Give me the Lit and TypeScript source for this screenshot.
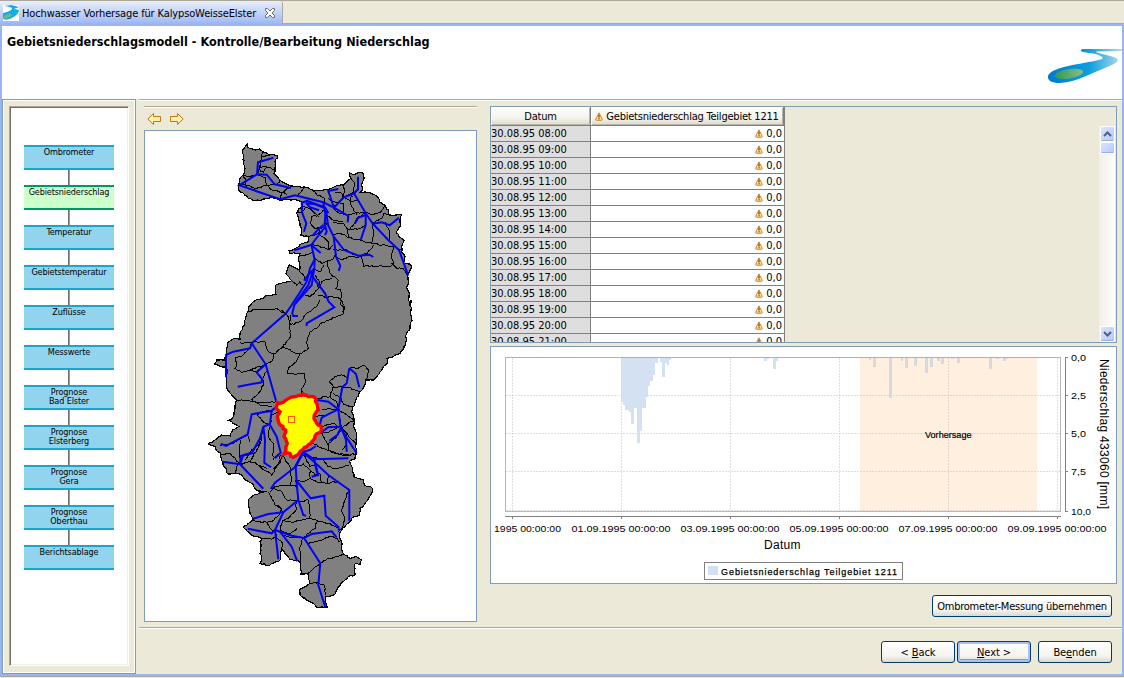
import { LitElement, html, svg, css } from "lit";
import { customElement } from "lit/decorators.js";

type Pt = [number, number];

// Map geometry is digitised on three sheets, three units per pixel.
const SHEET: Record<string, number> = { A: 135, B: 300, C: 450 };

function pts(src: string): Pt[] {
  let top = SHEET.A;
  const out: Pt[] = [];
  for (const tok of src.trim().split(/\s+/)) {
    if (SHEET[tok] !== undefined) { top = SHEET[tok]; continue; }
    const [x, y] = tok.split(",").map(Number);
    out.push([200 + x / 3, top + y / 3]);
  }
  return out;
}

let seed = 7;
function rnd() {
  seed = (seed * 16807) % 2147483647;
  return seed / 2147483647 - 0.5;
}

function rough(p: Pt[], amp = 1.3): Pt[] {
  const out: Pt[] = [p[0]];
  for (let i = 1; i < p.length; i++) {
    const [ax, ay] = p[i - 1], [bx, by] = p[i];
    const n = Math.max(1, Math.round(Math.hypot(bx - ax, by - ay) / 2.2));
    for (let k = 1; k < n; k++)
      out.push([ax + ((bx - ax) * k) / n + rnd() * amp, ay + ((by - ay) * k) / n + rnd() * amp]);
    out.push(p[i]);
  }
  return out;
}
const str = (p: Pt[]) => p.map(([x, y]) => x.toFixed(1) + "," + y.toFixed(1)).join(" ");

const OUTLINE = str(rough(pts(`A 142,28 148,40 165,45 178,42 188,50 205,58 232,62 225,80 225,100 222,115 235,130 245,140 265,150 285,155 305,157 325,158
 340,168 360,167 385,163 410,152 430,150 440,140 452,128 450,115 465,120 475,113 490,115 492,130 485,150 487,165 480,172 500,172 520,178
 535,188 540,203 555,210 565,225 565,238 590,240 605,238 600,260 600,275 590,290 597,305 612,315 605,335 605,350 615,365 610,385 632,388
 633,400 622,420 625,440 620,460 628,475 625,495 632,515 B 633,0 631,40 636,62 630,85 618,105 617,135 600,160 575,172 560,175 562,190
 545,210 520,240 497,240 495,255 480,275 463,310 455,335 462,355 460,380 470,400 468,430 470,460 C 465,25 448,35 458,60 462,80 490,90
 495,107 515,112 517,125 505,145 495,160 480,175 478,195 455,205 445,220 425,240 418,255 425,275 425,300 430,312 450,325 468,320 484,330
 482,342 465,342 463,365 465,375 445,380 430,395 412,415 405,432 385,440 376,440 375,455 382,472 350,472 340,460 320,450 300,435 298,420
 315,410 330,400 325,385 325,372 303,372 302,340 295,333 270,328 255,310 245,295 242,328 235,335 215,340 205,347 180,340 185,325 180,310
 183,290 180,275 185,265 160,258 143,245 130,232 145,220 160,210 150,190 145,170 145,150 165,133 200,125 170,122 155,100 135,88 125,75
 105,70 85,72 72,50 62,20 60,8 48,0 B 45,440 25,432 45,420 65,405 90,408 97,390 120,380 85,362 100,350 105,325 110,300 95,285 80,265
 78,230 82,210 80,200 60,200 43,192 50,180 75,180 80,145 85,125 105,115 120,118 120,100 133,75 140,45 145,25 A 145,520 160,500 185,490
 205,482 228,478 228,450 250,442 275,437 258,415 262,400 268,390 285,398 298,405 300,395 297,365 300,355 270,355 267,348 290,338 310,325
 325,320 325,305 302,300 305,285 300,265 290,235 295,222 310,215 305,200 285,193 240,195 210,188 165,198 145,190 130,175 118,170 115,150
 120,130 130,120 135,100 130,85 130,60 128,45 136,35 142,28`)));

const BORDERS = `A 188,50 183,75 178,95 172,118 150,125 130,122|A 178,95 200,96 222,104|A 178,103 190,112 202,96|A 183,65 210,60
A 118,150 135,150 135,130 128,122|A 135,150 170,160 200,150 222,150 240,140|A 150,165 170,160|A 172,118 196,128 200,150|A 240,190 245,175 265,160 275,155
A 200,150 215,165 250,172 262,180|A 285,183 300,175 310,158|A 340,168 350,180 375,190 372,200|A 385,163 390,190 405,215|A 430,150 432,168 428,190
A 452,128 465,145 460,172 440,182 430,190|A 405,172 425,175 435,190 455,200 470,195|A 385,190 395,200 430,205 432,235 445,245
A 400,220 420,235 445,240 460,235 497,232|A 460,172 450,195 455,215 470,240|A 497,232 515,240 540,232 555,212|A 518,265 545,250 550,235 565,238
A 497,232 470,250 462,268 443,285 445,308|A 518,265 522,300 515,325|A 445,285 480,280 497,268|A 555,262 570,290 568,315
A 400,300 420,295 445,308 480,315 515,325 545,330 580,335 605,345|A 400,262 430,265 445,285|A 380,240 400,255 430,262
A 580,335 575,360 580,385 570,395 490,393 485,365|A 485,365 450,365 425,375 405,362 400,372 382,378|A 485,365 505,350 520,330
A 575,385 590,400 610,400 622,420
A 400,345 440,345 460,360|A 382,378 385,400 395,420 415,435 408,460 422,465 425,485 420,505 432,515 430,535 B 430,20 430,42 410,50 388,60 365,68 350,85 330,95 320,125 325,145 300,162 275,155 270,148 248,142
A 302,300 325,305 345,300 370,285 382,262|A 370,225 355,240 335,245 332,265 345,280 370,278|A 310,215 330,220 345,235 358,245
A 290,235 310,228 318,215|A 355,280 360,300 385,320 385,345|A 335,328 360,335 385,345 400,330|A 342,370 365,385 382,378
A 300,362 325,358 340,350|A 340,400 360,410 372,390|A 345,420 358,440 352,465 330,485 315,480|A 355,480 375,487 390,485
A 395,430 365,440 358,460|A 275,437 290,450 300,440 310,450|A 390,485 420,490 430,510|A 298,405 310,420 320,440
A 145,528 180,522 210,525 230,520 250,535|B 245,30 265,50 270,75 300,65 320,40 350,20 360,0|B 270,45 268,80 272,110 248,142
B 120,128 155,128 195,125 205,155 222,162 248,142|B 155,128 150,145 125,168 105,175 110,195 105,205 125,217 150,212|B 222,162 215,185 195,195 165,205 150,212
B 150,212 165,215 190,200|B 300,162 290,185 265,205 262,220 315,222 315,250 305,265 305,282|B 200,215 190,230 190,255 180,275 155,300
B 110,300 150,303 190,308 228,305|B 155,300 180,315 215,320|B 172,345 190,335 215,330|B 205,375 185,360 172,345|B 235,335 215,345 212,370
B 345,300 375,290 390,290 400,260 388,245 405,230 425,225 445,232|B 448,205 475,205 490,195 505,210 500,240|B 480,275 445,262 400,262
B 388,290 410,305 415,330|B 400,280 425,295 430,315 455,320|B 415,330 440,345 460,360|B 365,330 390,325 412,330|B 345,350 380,345 410,330
B 360,380 400,370 425,385|B 360,400 385,398 420,378|B 385,430 410,410 425,385|B 425,385 445,370 462,360|B 415,340 425,385 468,430
B 365,395 375,420 385,435 385,450 410,460|B 330,425 355,440 410,460 445,465|B 410,460 435,468 470,460|B 440,400 440,430 428,450
B 60,437 100,430 142,405 150,425|B 120,420 118,450 122,490|B 185,400 178,430 155,450 135,480|B 190,380 185,420 170,455 145,465
B 210,380 205,410 220,430 220,470|B 242,460 225,470 220,480|B 250,460 240,490 220,505|B 122,490 150,485 175,495 200,505
C 60,15 90,10 120,42 150,35 165,5|C 165,35 185,55 215,75 235,40 242,15|C 105,70 110,50 120,42|C 245,15 270,50 275,85 270,105 225,110 210,125
C 205,125 215,145 225,165 240,170 250,188|C 220,115 245,125 260,150 290,152|C 270,105 290,110 287,90|C 287,50 310,42 330,60 330,85 310,95 287,90
C 330,60 345,75 360,70|C 310,15 330,50 350,40|C 330,20 370,30 385,50 410,55 448,45|C 385,75 382,100 350,95 330,85|C 360,70 365,100
C 382,100 415,95 445,120 435,150 425,180 435,205 428,230 415,245|C 290,155 285,185 265,205 250,212|C 300,155 325,150 330,180 328,205 300,212 280,218 250,212
C 160,210 185,218 215,215 240,190|C 200,220 215,240 228,240|C 185,265 215,268 230,262 225,240|C 240,190 245,175 230,168|C 230,262 248,280 245,300
C 248,210 240,240 250,255|C 250,255 275,262 310,262|C 310,262 345,235 350,215|C 328,205 355,215 390,220 418,240|C 310,262 300,290 302,340
C 310,262 325,280 365,270 390,258 412,265 418,275|C 303,372 325,370 362,340 385,325 410,320 430,312|C 355,398 330,400
C 355,400 372,405 378,435|C 240,240 270,252 290,235`
  .split(/[|\n]/).map((s) => str(rough(pts(s))));

const RIVERS = `A 220,68 174,82 171,118 118,151 240,193 285,181 370,202 402,218 445,243 443,262|A 171,118 200,119 224,148 273,159
A 474,125 474,163 462,175 430,188 402,218 385,168 415,162|A 462,175 497,235 518,266 565,315 597,345 625,422|A 518,266 545,262 569,271 597,248
A 497,235 497,270 482,315|A 497,240 475,248 464,266|A 305,203 322,197 355,210 372,215|A 305,203 307,235 319,265 312,290|A 318,203 330,217 357,226|A 322,205 345,208 372,218
A 370,203 376,235 375,270 380,290 375,300|A 374,215 385,235|A 376,250 372,280 345,315 334,330 283,346|A 370,270 350,288 338,302
A 334,330 362,354|A 334,328 344,375 343,400 325,420 312,437|A 343,375 330,400 320,440 275,510 258,535 B 155,130
A 343,400 335,450 305,485 283,510 277,535 B 280,48 294,48|A 335,415 340,428 375,475 386,500 403,517 B 320,70 320,78
A 338,410 325,450 285,505|A 378,225 384,270 401,305 432,345 475,362 508,359 520,366|A 401,305 408,365 421,392 416,408
B 155,130 150,145 100,155 78,165 78,232|B 155,130 197,193 228,302|B 197,193 170,217 187,238 185,247 113,260
B 228,320 215,332 155,343 143,403 78,438 62,431|B 215,332 210,372 190,380 180,415 155,460 122,468 120,493
B 190,380 195,420 193,488 213,502|B 210,375 230,410 242,458 225,475|B 352,300 385,305 415,328 390,340 365,353 360,372
B 448,205 440,250 427,262 415,328 422,385 470,460|B 448,205 468,222 478,262|B 360,400 385,382 422,380|B 422,385 412,405 388,422|B 425,385 438,420 440,455
B 348,438 330,450 310,455 285,500|B 310,455 342,478 445,475|B 342,478 352,520|C 68,35 120,43 190,116|C 120,43 130,15 155,8
C 310,8 287,50 225,98 212,117|C 287,50 290,100 295,150 310,195 318,197|C 288,90 332,145 373,137 377,197 415,230 417,242
C 310,8 342,35 385,75 448,120 448,212|C 342,28 355,75 335,80|C 295,150 250,187 205,192 160,206|C 250,187 225,240 230,285 235,328
C 225,240 215,250 143,236|C 225,240 275,257 312,264 335,252 395,244 410,262|C 240,245 275,290 292,334|C 312,264 361,340 355,405 376,472`
  .split(/[|\n]/).map((s) => str(pts(s)));

const SELECTED = str(rough(pts(`B 233,308 250,307 272,292 292,288 310,282 325,290 345,293 350,310 355,330 345,342 342,355 350,370 362,378 362,395
 345,408 335,425 320,440 300,455 280,472 262,458 252,462 262,430 252,410 257,390 237,370 232,350 240,335 228,322 233,308`), 1.5));

// x, width and lower end of each rainfall bar
const BARS: [number, number, number][] = [
  [621, 2, 402], [623, 2, 405], [625, 4, 410], [629, 2, 412], [631, 3, 424], [634, 3, 408], [637, 2.5, 443], [639.5, 2.5, 431],
  [642, 4, 408], [646, 2, 397], [648, 2, 386], [650, 3, 381], [653, 2, 375], [655, 3, 363], [660, 2, 362], [662, 3, 377], [665, 2, 363],
  [667, 2, 365], [669, 2, 360], [764, 3, 361], [767, 2, 359], [773, 3, 369], [776, 2, 361],
];
const FORECAST: [number, number, number][] = [
  [869, 2, 360], [873, 3, 367], [889, 3, 398], [901, 2, 361], [905, 3, 368], [914, 3, 366], [925, 3, 373], [930, 3, 367], [937, 3, 361],
  [941, 3, 364], [951, 3, 359], [957, 3, 363], [989, 3, 369], [996, 3, 359], [1003, 3, 361], [1006, 2, 359],
];

const STEPS = [["Ombrometer"], ["Gebietsniederschlag"], ["Temperatur"], ["Gebietstemperatur"], ["Zuflüsse"], ["Messwerte"],
  ["Prognose", "Bad Elster"], ["Prognose", "Elsterberg"], ["Prognose", "Gera"], ["Prognose", "Oberthau"], ["Berichtsablage"]];
const HOURS = ["08", "09", "10", "11", "12", "13", "14", "15", "16", "17", "18", "19", "20", "21"];

const warn = html`<svg class="warn" width="8" height="9" viewBox="0 0 8 9">
  <path d="M4 .8 L7.3 7.2 Q7.4 8.300 6.600 8.300 H1.400 Q.6 8.300 .7 7.200 Z" fill="#fbd98c" stroke="#d08a30" stroke-width="1"/>
  <path d="M4 2.500V5.500M4 6.200V7.300" stroke="#4a3000" stroke-width="1"/></svg>`;

@customElement("basin-map")
export class BasinMap extends LitElement {
  static styles = css`:host { display: block; } svg { display: block; }`;
  render() {
    return html`<svg width="331" height="490" viewBox="145 131 331 490" fill="none">
      <polygon points=${OUTLINE} fill="#808080" stroke="#000" stroke-width="1.2" shape-rendering="crispEdges"/>
      <g stroke="#000" stroke-width="1" shape-rendering="crispEdges">${BORDERS.map((b) => svg`<polyline points=${b}/>`)}</g>
      <g stroke="#0000fa" stroke-width="2">${RIVERS.map((r) => svg`<polyline points=${r}/>`)}</g>
      <polygon points=${SELECTED} fill="#ff0" stroke="#f00" stroke-width="3.4"/>
      <rect x="288.5" y="416.5" width="6" height="6" stroke="#ff5a00"/>
    </svg>`;
  }
}

@customElement("rain-chart")
export class RainChart extends LitElement {
  static styles = css`
    :host { display: block; }
    svg { display: block; font-family: "Liberation Sans", Arial, sans-serif; }
    .tick { font-size: 9.5px; }
    .title { font-size: 12px; }
    .mark { font-size: 9px; stroke: #000; stroke-width: 0.2; }
    .key { font-size: 9px; stroke: #000; stroke-width: 0.25; }
  `;
  render() {
    const days = ["01", "03", "05", "07", "09"];
    const vals: [string, number][] = [["0,0", 357.5], ["2,5", 395.5], ["5,0", 433.5], ["7,5", 471.5], ["10,0", 511.5]];
    const bar = ([x, w, y]: [number, number, number]) => svg`<rect x=${x} y="358" width=${w} height=${y - 358}/>`;
    return html`<svg width="625" height="236" viewBox="491 347 625 236">
      <rect x="505.5" y="357.5" width="555" height="154" fill="#fff" stroke="#b8b8b8"/>
      <rect x="860" y="358" width="177" height="153" fill="#feefdf"/>
      <g stroke="#c0c0c0" stroke-opacity=".5" stroke-dasharray="2 1">
        ${[395.5, 433.5, 471.5, 510.5].map((y) => svg`<path d="M506 ${y}H1060"/>`)}
        ${[512.5, 621.5, 730.5, 839.5, 948.5, 1057.5].map((x) => svg`<path d="M${x} 358V511"/>`)}
      </g>
      <g fill="#cfdef2" fill-opacity=".9" shape-rendering="crispEdges">${BARS.map(bar)}</g>
      <g fill="#d8d8de" shape-rendering="crispEdges">${FORECAST.map(bar)}</g>
      <path d="M505 357.5H1061" stroke="#b0b0b0"/>
      <path d="M505 516.5H1061M1065.5 357V512" stroke="#808080"/>
      <g stroke="#808080">
        ${[512.5, 621.5, 730.5, 839.5, 948.5, 1057.5].map((x) => svg`<path d="M${x} 516V519"/>`)}
        ${vals.map(([, y]) => svg`<path d="M1065 ${y}H1068"/>`)}
      </g>
      <g class="tick">
        <text x="494" y="532" textLength="67" lengthAdjust="spacingAndGlyphs">1995 00:00:00</text>
        ${days.map((d, i) => svg`<text x=${571.5 + i * 109} y="532" textLength="99" lengthAdjust="spacingAndGlyphs">${d}.09.1995 00:00:00</text>`)}
        ${vals.map(([t, y]) => svg`<text x="1071" y=${y + 3.8} textLength=${t.length > 3 ? 20 : 15} lengthAdjust="spacingAndGlyphs">${t}</text>`)}
        <text x="925" y="438" textLength="46.500" lengthAdjust="spacingAndGlyphs" class="mark">Vorhersage</text>
      </g>
      <text class="title" x="764" y="549" textLength="36.500">Datum</text>
      <text class="title" transform="translate(1100 359) rotate(90)" textLength="150">Niederschlag 433060 [mm]</text>
      <rect x="704.500" y="562.500" width="198" height="17" fill="#fff" stroke="#808080"/>
      <rect x="708" y="566" width="10" height="9" fill="#d3dff2"/>
      <text class="key" x="721" y="575" textLength="176">Gebietsniederschlag Teilgebiet 1211</text>
    </svg>`;
  }
}

@customElement("app-root")
export class AppRoot extends LitElement {
  static styles = css`
    :host { display: block; width: 1124px; height: 678px; overflow: hidden; color: #000;
      font: 11px/14px "DejaVu Sans Condensed", "DejaVu Sans", sans-serif; font-stretch: condensed; }
    * { box-sizing: border-box; }
    svg { display: block; flex: none; }
    .window { height: 678px; display: flex; flex-direction: column; background: #ece9d8; }
    .tabs { height: 24px; display: flex; border-top: 1px solid #aca899; flex: none; }
    .tab { width: 283px; display: flex; align-items: center; padding-left: 3px; border-right: 1px solid #aca899;
      border-top-right-radius: 3px; background: linear-gradient(#e9effc, #a8c0f5 85%, #99b4f1); }
    .tab-text { width: 239px; margin-left: 3px; white-space: nowrap; letter-spacing: -0.13px; padding-top: 2px; }
    .close { margin-left: 3px; }
    .rest { flex: 1; border-bottom: 1px solid #aca899; }
    .frame { height: 652px; flex: none; border: 2px solid #99b4f1; display: flex; flex-direction: column; background: #ece9d8; }
    .head { height: 73px; flex: none; display: flex; justify-content: space-between; background: #fff; padding: 9px 0 0 5px; }
    .head-text { font-weight: bold; font-size: 12.5px; letter-spacing: 0.05px; white-space: nowrap; }
    .head svg { margin-top: 12px; }
    .body { flex: 1; display: flex; min-height: 0; }
    .side { width: 134px; flex: none; border: 1px solid #7f9db9; box-shadow: inset 1px 1px #fff, inset -1px -1px #fff; padding: 6px; }
    .well { width: 120px; height: 560px; border: 1px solid; border-color: #aca899 #fff #fff #aca899; background: #fff;
      box-shadow: inset 1px 1px #716f64, inset -1px -1px #f1efe2; padding: 38px 0 0 14px; display: flex; flex-direction: column; }
    .step { width: 90px; height: 25px; flex: none; border: solid #1ea2cf; border-width: 2px 0; background: #91d4ed; text-align: center; padding-top: 1px;
      font-size: 9px; line-height: 9px; letter-spacing: -0.12px; white-space: nowrap; }
    .step.on { background: #ccffcc; border-color: #009966; }
    .link { width: 2px; height: 15px; flex: none; margin-left: 44px; background: #6f6f6f; border-right: 1px solid #999; }
    .main { flex: 1; margin-left: 3px; display: flex; flex-direction: column; border-top: 1px solid #aca899; box-shadow: inset 0 1px #fff; }
    .cols { height: 528px; flex: none; display: flex; padding: 6px 5px 0; gap: 13px; border-bottom: 1px solid #aca899; }
    .left { width: 333px; flex: none; }
    .tools { height: 24px; border-top: 1px solid #aca899; box-shadow: inset 0 1px #fff; padding: 5px 3px; display: flex; gap: 9px; }
    .map { height: 492px; border: 1px solid #7f9db9; background: #fff; }
    .right { width: 627px; flex: none; display: flex; flex-direction: column; align-items: flex-end; }
    .table { width: 627px; height: 237px; flex: none; border: 1px solid #7f9db9; display: flex; justify-content: space-between; overflow: hidden; }
    .grid { width: 294px; border-right: 1px solid #808080; }
    .row { height: 16px; display: grid; grid-template-columns: 100px 193px; }
    .cell { background: #fff; border-bottom: 1px solid #808080; display: flex; align-items: center; justify-content: flex-end; gap: 3px; padding-right: 2px; line-height: 15px; }
    .date { background: #dedede; border-right: 1px solid #808080; justify-content: flex-start; letter-spacing: 0; white-space: nowrap; }
    .row.top { height: 19px; }
    .th { border-bottom: 1px solid #808080; border-right: 1px solid #808080; display: flex; align-items: center; justify-content: center; gap: 3px;
      background: linear-gradient(#fff, #f4f3ec 60%, #dedacb); white-space: nowrap; box-shadow: inset 1px 1px #fff, inset -1px -1px #b8b5a6; letter-spacing: -0.22px; padding-top: 1px; }
    .scroll { width: 16px; height: 216px; margin-top: 19px; margin-right: 1px; background: linear-gradient(90deg, #f1efe8, #fefefb); display: flex; flex-direction: column; }
    .sb { height: 16px; width: 15px; margin-left: 1px; border: 1px solid #fff; border-radius: 2px; background: linear-gradient(135deg, #dbe5fd, #b3c8fa);
      display: flex; align-items: center; justify-content: center; box-shadow: inset 0 -1px #98b0e6; }
    .sb.thumb { height: 12px; }
    .gap { flex: 1; }
    .chart { width: 627px; height: 238px; flex: none; margin-top: 3px; border: 1px solid #7f9db9; background: #fff; }
    button { font: inherit; font-stretch: inherit; color: #000; width: 74px; height: 22px; padding: 1px 0 0; border: 1px solid #003c74; border-radius: 3px; flex: none;
      background: linear-gradient(#fff, #f5f4ee 70%, #dcd8ca); white-space: nowrap; letter-spacing: -0.1px; }
    .next { box-shadow: inset 0 0 0 2px #a8c2f4, inset 0 -1px 0 2px #7d9fe0; margin: 0 7px 0 2px; }
    .take { width: 180px; margin: 11px 5px 0 0; letter-spacing: -0.23px; }
    .foot { flex: 1; display: flex; justify-content: flex-end; padding: 13px 10px 0; box-shadow: inset 0 1px #fff; }
    .edge { height: 2px; border-top: 1px solid #aca899; }
  `;

  arrow(flip: boolean) {
    return html`<svg width="14" height="14" viewBox="0 0 14 14"><path transform=${flip ? "matrix(-1 0 0 1 14 0)" : ""}
      d="M.8 7 L6.500 1.500 V4.500 H13.500 V9.500 H6.500 V12.500 Z" fill="#ffefad" stroke="#bd7b12"/></svg>`;
  }
  chevron(down: boolean) {
    return html`<svg width="9" height="6" viewBox="0 0 9 6"><path d=${down ? "M1 1L4.500 4.500L8 1" : "M1 5L4.500 1.500L8 5"} fill="none" stroke="#4d6185" stroke-width="2"/></svg>`;
  }

  render() {
    return html`<div class="window">
      <div class="tabs">
        <div class="tab">
          <svg width="16" height="16" viewBox="0 0 16 16"><path d="M0 0H16V16H0Z" fill="#fff"/>
            <path d="M1 1Q10 2 9 4Q8 6 0 8V14Q3 16 9 13Q16 9 16 5L11 4L16 2L8 0Z" fill="#12ade4"/>
            <path d="M0 2Q8 3 8 4Q7 6 0 8Z" fill="#fff"/><path d="M0 13Q1 10 5 9Q9 8 9 10Q7 13 0 14Z" fill="#65b98a"/></svg>
          <div class="tab-text">Hochwasser Vorhersage für KalypsoWeisseElster</div>
          <svg class="close" width="12" height="12" viewBox="0 0 12 12"><path d="M1.500 1.500H3.500L6 4L8.500 1.500H10.500V3.500L8 6L10.500 8.500V10.500H8.500L6 8L3.500 10.500H1.500V8.500L4 6L1.500 3.500Z" fill="#fff" stroke="#6d6d6d"/></svg>
        </div>
        <div class="rest"></div>
      </div>
      <div class="frame">
        <div class="head">
          <div class="head-text">Gebietsniederschlagsmodell - Kontrolle/Bearbeitung Niederschlag</div>
          <svg width="76" height="38" viewBox="1046 47 76 38">
            <defs>
              <linearGradient id="w" x1="0" x2="1"><stop offset="0" stop-color="#0079d0"/><stop offset=".55" stop-color="#0a9fdc"/><stop offset="1" stop-color="#b5dbea"/></linearGradient>
              <linearGradient id="g" x1="0" x2="1"><stop offset="0" stop-color="#2f9a55"/><stop offset="1" stop-color="#86bd85"/></linearGradient>
            </defs>
            <path d="M1122 49H1082Q1079 51 1083 52L1096 54Q1105 57 1102 59Q1096 61 1075 64.500Q1050 69 1048 76Q1047 83 1060 83Q1073 82 1086 76Q1100 70 1112 65Q1120 61 1117 58.500Q1112 56 1102 54Q1094 52 1097 51.500L1122 51Z" fill="url(#w)"/>
            <ellipse cx="1069" cy="73.800" rx="14.300" ry="4.700" transform="rotate(-9 1069 73.800)" fill="url(#g)"/>
          </svg>
        </div>
        <div class="body">
          <div class="side"><div class="well">
            ${STEPS.map((s, i) => html`${i ? html`<div class="link"></div>` : ""}
              <div class="step ${i === 1 ? "on" : ""}">${s.map((l) => html`<div>${l}</div>`)}</div>`)}
          </div></div>
          <div class="main">
            <div class="cols">
              <div class="left">
                <div class="tools">${this.arrow(false)}${this.arrow(true)}</div>
                <div class="map"><basin-map></basin-map></div>
              </div>
              <div class="right">
                <div class="table">
                  <div class="grid">
                    <div class="row top"><div class="th">Datum</div><div class="th">${warn}<span>Gebietsniederschlag Teilgebiet 1211</span></div></div>
                    ${HOURS.map((h) => html`<div class="row"><div class="cell date">30.08.95 ${h}:00</div><div class="cell">${warn}<span>0,0</span></div></div>`)}
                  </div>
                  <div class="scroll"><div class="sb">${this.chevron(false)}</div><div class="sb thumb"></div><div class="gap"></div><div class="sb">${this.chevron(true)}</div></div>
                </div>
                <div class="chart"><rain-chart></rain-chart></div>
                <button class="take">Ombrometer-Messung übernehmen</button>
              </div>
            </div>
            <div class="foot">
              <button>&lt; <u>B</u>ack</button><button class="next"><u>N</u>ext &gt;</button><button>Be<u>e</u>nden</button>
            </div>
          </div>
        </div>
      </div>
      <div class="edge"></div>
    </div>`;
  }
}
